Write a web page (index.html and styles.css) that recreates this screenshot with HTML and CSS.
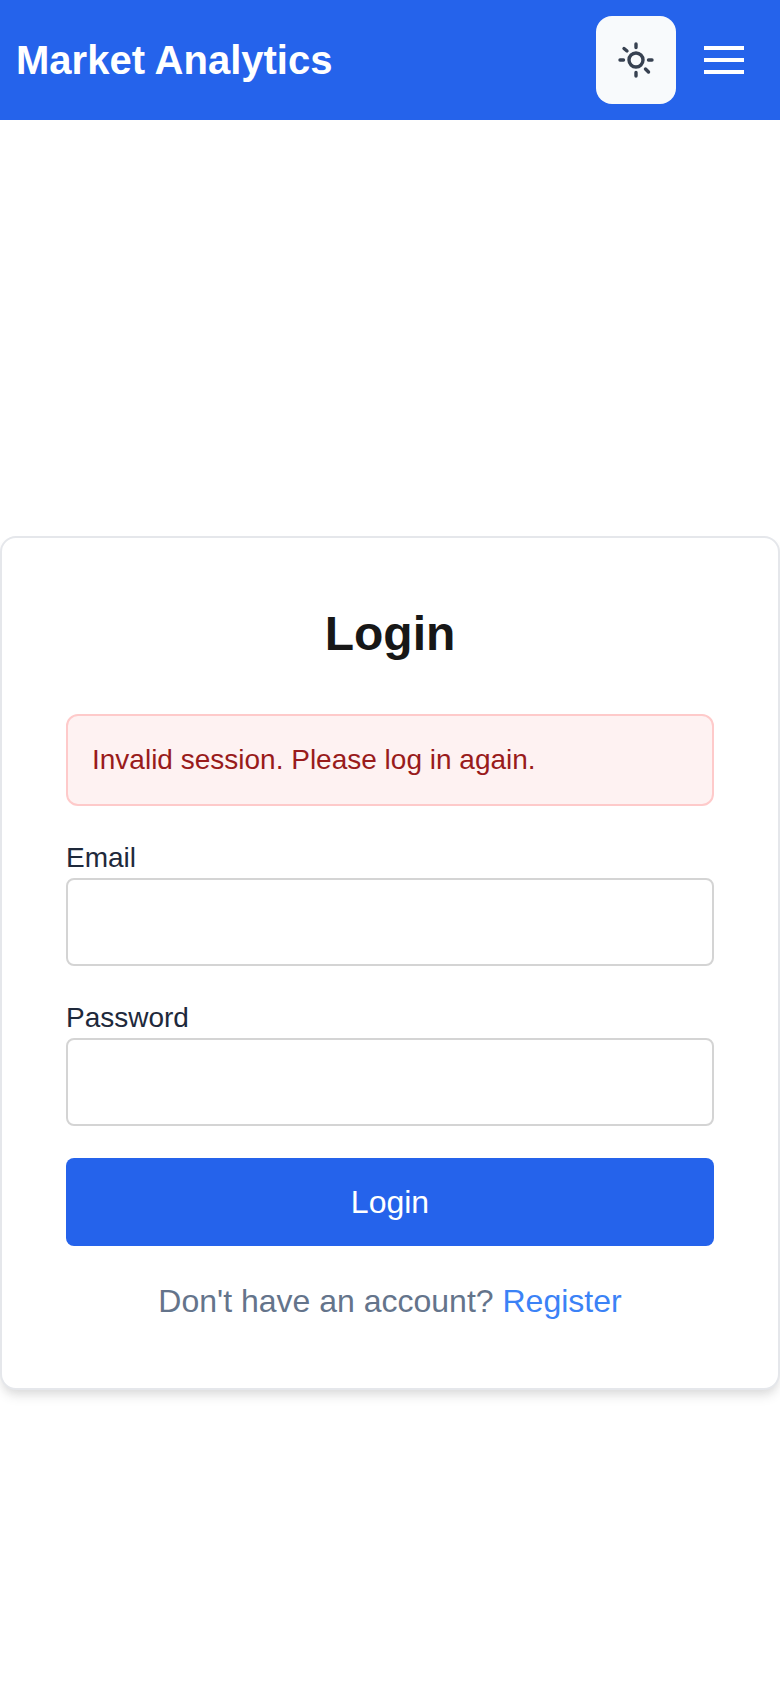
FILE: index.html
```html
<!DOCTYPE html>
<html lang="en">
<head>
<meta charset="UTF-8">
<meta name="viewport" content="width=device-width, initial-scale=1.0">
<title>Market Analytics - Login</title>
<link rel="stylesheet" href="styles.css">
</head>
<body>

<header class="topbar">
  <div class="brand">Market Analytics</div>
  <div class="topbar-actions">
    <button type="button" class="theme-toggle" aria-label="Toggle theme">
      <svg width="40" height="40" viewBox="0 0 40 40" fill="none" stroke="#374151" stroke-width="3.4" stroke-linecap="round">
        <circle cx="20" cy="20" r="7"/>
        <path d="M20 4v3.500M20 32.500v3.500M4 20h3.500M32.500 20h3.500M8 8.500l3 2.500M29.500 29l3 3"/>
      </svg>
    </button>
    <button type="button" class="menu-toggle" aria-label="Menu">
      <span></span><span></span><span></span>
    </button>
  </div>
</header>

<main class="page">
  <div class="card">
    <h1>Login</h1>
    <div class="alert">Invalid session. Please log in again.</div>
    <form class="login-form">
      <div class="field">
        <label for="email">Email</label>
        <input type="email" id="email">
      </div>
      <div class="field">
        <label for="password">Password</label>
        <input type="password" id="password">
      </div>
      <button type="button" class="submit">Login</button>
    </form>
    <p class="switch">Don't have an account? <a href="#">Register</a></p>
  </div>
</main>

</body>
</html>
```

FILE: styles.css
```css
* {
  box-sizing: border-box;
}

body {
  margin: 0;
  min-height: 100vh;
  background: #fff;
  font-family: "Liberation Sans", Arial, Helvetica, sans-serif;
}

.topbar {
  height: 120px;
  padding: 0 36px 0 16px;
  background: #2563eb;
  display: flex;
  align-items: center;
  justify-content: space-between;
}

.brand {
  color: #fff;
  font-size: 40px;
  font-weight: bold;
}

.topbar-actions {
  display: flex;
  align-items: center;
  gap: 28px;
}

.theme-toggle {
  width: 80px;
  height: 88px;
  padding: 0;
  border: none;
  border-radius: 16px;
  background: #f8fafc;
  display: flex;
  align-items: center;
  justify-content: center;
}

.menu-toggle {
  width: 40px;
  padding: 0;
  border: none;
  background: none;
  display: flex;
  flex-direction: column;
  gap: 8px;
}

.menu-toggle span {
  display: block;
  height: 4px;
  background: #fff;
}

.page {
  padding-top: 416px;
}

.card {
  padding: 64px;
  background: #fff;
  border: 2px solid #e5e7eb;
  border-radius: 16px;
  box-shadow: 0 8px 12px -2px rgba(0,0,0,0.1), 0 4px 8px -2px rgba(0,0,0,0.06);
}

h1 {
  margin: 0 0 48px;
  text-align: center;
  color: #171717;
  font-size: 48px;
  line-height: 64px;
}

.alert {
  height: 92px;
  margin-bottom: 32px;
  padding: 0 24px;
  display: flex;
  align-items: center;
  background: #fef2f2;
  border: 2px solid #fecaca;
  border-radius: 12px;
  color: #991b1b;
  font-size: 28px;
}

.field {
  margin-bottom: 32px;
}

label {
  display: block;
  color: #1e293b;
  font-size: 28px;
  line-height: 40px;
}

input {
  display: block;
  width: 100%;
  height: 88px;
  border: 2px solid #d4d4d4;
  border-radius: 8px;
  background: #fff;
}

.submit {
  display: block;
  width: 100%;
  height: 88px;
  border: none;
  border-radius: 8px;
  background: #2563eb;
  color: #fff;
  font-family: inherit;
  font-size: 32px;
}

.switch {
  margin: 32px 0 0;
  text-align: center;
  color: #64748b;
  font-size: 32px;
  line-height: 46px;
}

.switch a {
  color: #3b82f6;
  text-decoration: none;
}
```
